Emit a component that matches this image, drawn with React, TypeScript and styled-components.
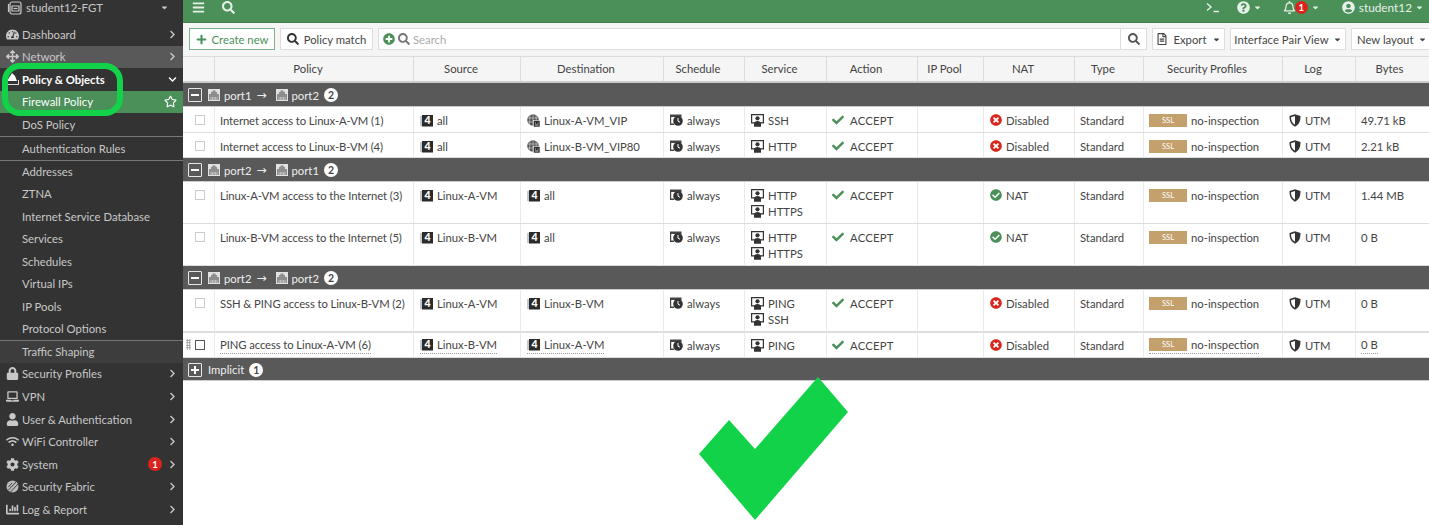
import React from 'react'
import styled, { createGlobalStyle } from 'styled-components'
import {
  FaArrowsAlt,
  FaBars,
  FaCaretDown,
  FaChartBar,
  FaCheck,
  FaCheckCircle,
  FaChevronDown,
  FaChevronRight,
  FaCog,
  FaLaptop,
  FaLock,
  FaPlus,
  FaPlusCircle,
  FaQuestionCircle,
  FaRegBell,
  FaRegFileAlt,
  FaRegStar,
  FaSearch,
  FaTachometerAlt,
  FaTimesCircle,
  FaUser,
  FaUserCircle,
  FaWifi,
} from 'react-icons/fa'

const GlobalStyle = createGlobalStyle`
  html, body {
    margin: 0;
    padding: 0;
    background: #fff;
  }
  * {
    box-sizing: border-box;
  }
`

const Page = styled.div`
  position: relative;
  width: 1429px;
  height: 525px;
  display: flex;
  overflow: hidden;
  font-family: Lato, 'Open Sans', sans-serif;
  font-size: 11.3px;
  color: #444;
`

/* ---- sidebar ---- */

const Sidebar = styled.nav`
  width: 183px;
  flex-shrink: 0;
  height: 525px;
  background: #333;
  color: #ccc;
  display: flex;
  flex-direction: column;
  overflow: hidden;
`

const DeviceRow = styled.div`
  height: 23px;
  flex-shrink: 0;
  padding: 0 14px 8px 7px;
  display: flex;
  align-items: center;
  gap: 3px;
  font-size: 11.4px;
  color: #c8c8c8;
`

const NavItem = styled.div<{ $hover?: boolean; $active?: boolean; $open?: boolean; $sub?: boolean; $tall?: boolean; $shade?: boolean; $rule?: boolean }>`
  height: ${({ $tall }) => ($tall ? '24px' : '22.55px')};
  flex-shrink: 0;
  display: flex;
  align-items: center;
  padding: 0 6px 0 ${({ $sub }) => ($sub ? '22px' : '4px')};
  color: ${({ $active, $open }) => ($active || $open ? '#fff' : '#c8c8c8')};
  font-weight: ${({ $open }) => ($open ? 700 : 400)};
  background: ${({ $hover, $active, $shade }) =>
    $active ? '#4a9058' : $hover ? '#595959' : $shade ? '#3d3d3d' : '#333'};
  border-top: ${({ $rule }) => ($rule ? '1px solid #777' : '0')};
`

const NavIcon = styled.span`
  width: 17px;
  margin-right: 1px;
  display: flex;
  justify-content: center;
  font-size: 13px;
`

const NavLabel = styled.span`
  flex: 1;
  white-space: nowrap;
`

const NavChevron = styled.span`
  display: flex;
  font-size: 9px;
  margin-left: 6px;
`

const AlertBadge = styled.span`
  width: 14px;
  height: 14px;
  border-radius: 50%;
  background: #d9251d;
  color: #fff;
  font-size: 9.5px;
  font-weight: 700;
  display: flex;
  align-items: center;
  justify-content: center;
`

/* ---- main column ---- */

const Main = styled.main`
  flex: 1;
  min-width: 0;
  display: flex;
  flex-direction: column;
`

const TopBar = styled.header`
  height: 23px;
  flex-shrink: 0;
  background: #4a9058;
  border-bottom: 1px solid #3f8050;
  color: #e6f0e8;
  display: flex;
  align-items: center;
  padding: 0 5px 7px 9px;
  font-size: 11.8px;
`

const TopIcon = styled.span<{ $gap?: number }>`
  display: flex;
  align-items: center;
  font-size: 13px;
  margin-right: ${({ $gap }) => $gap ?? 0}px;
`

const TopName = styled.span`
  margin-left: 4px;
  line-height: 16px;
`

const Spacer = styled.div`
  flex: 1;
`

const TopCaret = styled.span`
  display: flex;
  font-size: 9px;
  margin-left: 3px;
`

const BellBadge = styled(AlertBadge)`
  width: 13px;
  height: 13px;
  margin-left: -1px;
`

const Toolbar = styled.div`
  height: 33px;
  flex-shrink: 0;
  background: #f5f5f5;
  padding: 5px 0 6px 6px;
  display: flex;
  align-items: stretch;
  gap: 5px;
`

const ToolButton = styled.div<{ $primary?: boolean; $width: number }>`
  width: ${({ $width }) => $width}px;
  flex-shrink: 0;
  display: flex;
  align-items: center;
  justify-content: center;
  gap: 5px;
  background: #fff;
  border: 1px solid ${({ $primary }) => ($primary ? '#7eb28a' : '#ddd')};
  color: ${({ $primary }) => ($primary ? '#4a9058' : '#444')};
  white-space: nowrap;

  svg {
    flex-shrink: 0;
  }
`

const PairButton = styled(ToolButton)`
  gap: 4px;
  letter-spacing: 0.05px;
`

const LayoutButton = styled(ToolButton)`
  justify-content: flex-start;
  padding-left: 5px;
  border-right: 0;
`

const SearchBox = styled.div`
  flex: 1;
  min-width: 0;
  display: flex;
  align-items: center;
  background: #fff;
  border: 1px solid #ddd;
  padding-left: 4px;
  color: #aaa;
  gap: 3px;
`

const SearchText = styled.span`
  flex: 1;
`

const SearchButton = styled.span`
  width: 26px;
  height: 100%;
  border-left: 1px solid #ddd;
  color: #555;
  display: flex;
  align-items: center;
  justify-content: center;
`

const GRID = '32px 199px 107px 143px 81px 82px 91px 66px 91px 69px 139px 73px 73px'

const HeaderRow = styled.div`
  height: 27px;
  flex-shrink: 0;
  display: grid;
  grid-template-columns: ${GRID};
  background: #f5f5f5;
  border-top: 1px solid #ddd;
  border-bottom: 2px solid #ccc;
`

const HeaderCell = styled.div`
  display: flex;
  align-items: center;
  justify-content: center;
  padding: 0 12px 1px 0;
  border-right: 1px solid #ddd;
  color: #444;

  &:last-child {
    border-right: 0;
    padding-right: 6px;
  }
`

const SectionRow = styled.div<{ $height?: number }>`
  height: ${({ $height }) => $height ?? 24}px;
  flex-shrink: 0;
  background: #595959;
  border-bottom: 1px solid #ccc;
  color: #eee;
  display: flex;
  align-items: center;
  padding: 1px 0 0 5px;
  gap: 4px;
`

const Toggle = styled.span`
  width: 14px;
  height: 14px;
  border: 1px solid #e6e6e6;
  border-radius: 1px;
  background: #595959;
  position: relative;
  margin-right: 2px;

  &:before {
    content: '';
    position: absolute;
    left: 2px;
    right: 2px;
    top: 5px;
    height: 2px;
    background: #fff;
  }
`

const ToggleOpen = styled(Toggle)`
  &:after {
    content: '';
    position: absolute;
    top: 2px;
    bottom: 2px;
    left: 5px;
    width: 2px;
    background: #fff;
  }
`

const Arrow = styled.span`
  margin: 0 5px 0 1px;
  font-size: 12px;
  font-family: 'DejaVu Sans', sans-serif;
  line-height: 1;
`

const CountBadge = styled.span`
  width: 14px;
  height: 14px;
  border-radius: 50%;
  background: #fff;
  color: #444;
  font-size: 10.5px;
  font-weight: 700;
  display: flex;
  align-items: center;
  justify-content: center;
  margin-left: 1px;
`

const DataRow = styled.div<{ $height: number; $hover?: boolean }>`
  position: relative;
  height: ${({ $height }) => $height}px;
  flex-shrink: 0;
  display: grid;
  grid-template-columns: ${GRID};
  border-bottom: 1px solid #ddd;
  box-shadow: ${({ $hover }) => ($hover ? 'inset 0 1px 0 #ddd' : 'none')};
  background: #fff;
`

const Cell = styled.div`
  padding: 5px 5px 0;
  border-right: 1px solid #eaeaea;
  display: flex;
  flex-direction: column;
  align-items: flex-start;
  gap: 0;
  white-space: nowrap;

  &:last-child {
    border-right: 0;
  }
`

const IconCell = styled(Cell)`
  padding-left: 6px;
`

const CheckCell = styled(Cell)`
  padding: 8px 0 0 12px;
`

const CheckBox = styled.span<{ $dark?: boolean }>`
  width: 10px;
  height: 10px;
  border: 1px solid ${({ $dark }) => ($dark ? '#555' : '#ccc')};
  background: #fff;
  display: block;
`

const DragDots = styled.span`
  position: absolute;
  left: 3px;
  top: 7px;
  width: 5px;
  height: 11px;
  background-image: radial-gradient(#777 0.8px, transparent 0.9px);
  background-size: 2.5px 2.5px;
`

const CellLine = styled.span<{ $hover?: boolean }>`
  height: 16.5px;
  display: inline-flex;
  align-items: center;
  gap: 4px;
  color: #444;
  border-bottom: ${({ $hover }) => ($hover ? '1px dotted #999' : '0')};
`

const PolicyName = styled(CellLine)`
  letter-spacing: -0.1px;
`

const AcceptLine = styled(CellLine)`
  gap: 6px;
  letter-spacing: 0.2px;
`

const SslTag = styled.span`
  width: 38px;
  height: 13px;
  background: #c4a06c;
  color: #fff;
  font-size: 7.5px;
  display: inline-flex;
  align-items: center;
  justify-content: center;
`

const Blank = styled.div`
  flex: 1;
  background: #fff;
`

/* annotations sitting on top of the screenshot */

const Ring = styled.div`
  position: absolute;
  left: 2px;
  top: 63px;
  width: 121px;
  height: 53px;
  border: 6px solid #12d24a;
  border-radius: 18px;
  pointer-events: none;
`

const BigCheck = styled.svg`
  position: absolute;
  left: 690px;
  top: 370px;
  pointer-events: none;
`

/* ---- drawn icons ---- */

const DeviceIcon = () => (
  <svg width="16" height="16" viewBox="0 0 16 16" fill="none" stroke="#c8c8c8" strokeWidth="1.2">
    <rect x="3" y="2" width="11" height="12" rx="2" />
    <path d="M1.500 4v8M5 6h7v5H5z" />
    <path d="M6.500 8.500h4" />
  </svg>
)

const PolicyIcon = () => (
  <svg width="15" height="14" viewBox="0 0 15 14">
    <path d="M2 9 L7 1 L10 4 L12 9z" fill="#fff" />
    <path d="M1 8v5h13V8h-1v4H2V8z" fill="#ddd" />
  </svg>
)

const FabricIcon = () => (
  <svg width="13" height="13" viewBox="0 0 13 13">
    <circle cx="6.500" cy="6.500" r="6" fill="#bbb" />
    <path d="M2 10.500 10 2M4.500 12 12 4M6 3 2.500 7" stroke="#333" strokeWidth="0.9" />
  </svg>
)

const TerminalIcon = () => (
  <svg width="14" height="11" viewBox="0 0 14 11" fill="none" stroke="#e6f0e8" strokeWidth="1.4">
    <path d="M1 1.500 5 5 1 8.500M7.500 9.500H13" />
  </svg>
)

const PortIcon = () => (
  <svg width="12" height="12" viewBox="0 0 12 12">
    <rect width="12" height="12" fill="#e2e2e2" />
    <path d="M1 11V5h2V3h1.500V1.500h3V3H9v2h2v6z" fill="#8e8e8e" />
    <path d="M3 8v3M4.500 8v3M6 8v3M7.500 8v3M9 8v3" stroke="#e2e2e2" strokeWidth="0.6" />
  </svg>
)

const AddressIcon = () => (
  <svg width="13" height="13" viewBox="0 0 13 13">
    <rect x="2" y="1" width="11" height="11.500" fill="#2b2b2b" />
    <path d="M0 3h2M0 5h2M0 7h2M0 9h2M0 11h2" stroke="#777" strokeWidth="0.8" />
    <text x="7.500" y="10.400" fontFamily="Lato, sans-serif" fontWeight="900" fontSize="10.500" fill="#fff" textAnchor="middle">
      4
    </text>
  </svg>
)

const VipIcon = () => (
  <svg width="13" height="13" viewBox="0 0 13 13">
    <circle cx="6" cy="6" r="5.800" fill="#555" />
    <path d="M0.500 4h11M0.500 8h11M6 0v12M3 1 2.500 11M9 1l.5 10" stroke="#ddd" strokeWidth="0.6" />
    <rect x="6.500" y="6.500" width="6.500" height="6.500" fill="#2b2b2b" stroke="#fff" strokeWidth="0.6" />
    <path d="M8 9h1M10.500 9h1M8 11h3.500" stroke="#ddd" strokeWidth="0.9" />
  </svg>
)

const ScheduleIcon = () => (
  <svg width="13" height="12" viewBox="0 0 13 12">
    <path d="M0 0.500h11.500V3H1.200v6.500H4V11H0z" fill="#444" />
    <circle cx="8" cy="7" r="4.800" fill="#333" />
    <path d="M8 4v3.200l2 1" stroke="#fff" strokeWidth="1" fill="none" />
  </svg>
)

const ServiceIcon = () => (
  <svg width="13" height="13" viewBox="0 0 13 13">
    <path d="M0 0h13v9.500H9V8.300h2.800V1.200H1.200v7.100H4v1.200H0z" fill="#333" />
    <circle cx="6.500" cy="4.300" r="2.100" fill="#333" />
    <path d="M3 12.800V9.500c0-1.500 1.600-2.600 3.500-2.600S10 8 10 9.500v3.300z" fill="#333" />
  </svg>
)

const ShieldIcon = () => (
  <svg width="12" height="13" viewBox="0 0 12 13">
    <path d="M6 0.300 11.500 2c0 5-1.300 8.500-5.500 10.700C1.800 10.500.5 7 .5 2z" fill="#333" />
    <path d="M6 2 2 3.200c0 3.300.9 5.800 4 7.500z" fill="#fff" />
  </svg>
)

/* ---- data ---- */

type NavEntry = {
  label: string
  icon?: React.ReactNode
  hover?: boolean
  open?: boolean
  active?: boolean
  sub?: boolean
  tall?: boolean
  shade?: boolean
  rule?: boolean
  arrow?: boolean
  alert?: boolean
  star?: boolean
}

const navItems: NavEntry[] = [
  { label: 'Dashboard', icon: <FaTachometerAlt />, arrow: true },
  { label: 'Network', icon: <FaArrowsAlt />, hover: true, arrow: true },
  { label: 'Policy & Objects', icon: <PolicyIcon />, open: true },
  { label: 'Firewall Policy', sub: true, active: true, star: true },
  { label: 'DoS Policy', sub: true },
  { label: 'Authentication Rules', sub: true, tall: true, rule: true },
  { label: 'Addresses', sub: true, rule: true },
  { label: 'ZTNA', sub: true },
  { label: 'Internet Service Database', sub: true },
  { label: 'Services', sub: true },
  { label: 'Schedules', sub: true },
  { label: 'Virtual IPs', sub: true },
  { label: 'IP Pools', sub: true },
  { label: 'Protocol Options', sub: true },
  { label: 'Traffic Shaping', sub: true, shade: true, rule: true },
  { label: 'Security Profiles', icon: <FaLock />, arrow: true },
  { label: 'VPN', icon: <FaLaptop />, arrow: true },
  { label: 'User & Authentication', icon: <FaUser />, arrow: true },
  { label: 'WiFi Controller', icon: <FaWifi />, arrow: true },
  { label: 'System', icon: <FaCog />, arrow: true, alert: true },
  { label: 'Security Fabric', icon: <FabricIcon />, arrow: true },
  { label: 'Log & Report', icon: <FaChartBar />, arrow: true },
]

const columns = [
  '',
  'Policy',
  'Source',
  'Destination',
  'Schedule',
  'Service',
  'Action',
  'IP Pool',
  'NAT',
  'Type',
  'Security Profiles',
  'Log',
  'Bytes',
]

type Policy = {
  name: string
  source: string
  dest: string
  vip?: boolean
  services: string[]
  nat: boolean
  bytes: string
  height: number
  hover?: boolean
}

type Section = { from: string; to: string; count: number; rows: Policy[] }

const sections: Section[] = [
  {
    from: 'port1',
    to: 'port2',
    count: 2,
    rows: [
      { name: 'Internet access to Linux-A-VM (1)', source: 'all', dest: 'Linux-A-VM_VIP', vip: true, services: ['SSH'], nat: false, bytes: '49.71 kB', height: 26 },
      { name: 'Internet access to Linux-B-VM (4)', source: 'all', dest: 'Linux-B-VM_VIP80', vip: true, services: ['HTTP'], nat: false, bytes: '2.21 kB', height: 25 },
    ],
  },
  {
    from: 'port2',
    to: 'port1',
    count: 2,
    rows: [
      { name: 'Linux-A-VM access to the Internet (3)', source: 'Linux-A-VM', dest: 'all', services: ['HTTP', 'HTTPS'], nat: true, bytes: '1.44 MB', height: 42 },
      { name: 'Linux-B-VM access to the Internet (5)', source: 'Linux-B-VM', dest: 'all', services: ['HTTP', 'HTTPS'], nat: true, bytes: '0 B', height: 42 },
    ],
  },
  {
    from: 'port2',
    to: 'port2',
    count: 2,
    rows: [
      { name: 'SSH & PING access to Linux-B-VM (2)', source: 'Linux-A-VM', dest: 'Linux-B-VM', services: ['PING', 'SSH'], nat: false, bytes: '0 B', height: 42 },
      { name: 'PING access to Linux-A-VM (6)', source: 'Linux-B-VM', dest: 'Linux-A-VM', services: ['PING'], nat: false, bytes: '0 B', height: 26, hover: true },
    ],
  },
]

const PolicyRow = ({ row }: { row: Policy }) => (
  <DataRow $height={row.height} $hover={row.hover}>
    {row.hover && <DragDots />}
    <CheckCell>
      <CheckBox $dark={row.hover} />
    </CheckCell>
    <Cell>
      <PolicyName $hover={row.hover}>{row.name}</PolicyName>
    </Cell>
    <IconCell>
      <CellLine $hover={row.hover}>
        <AddressIcon />
        {row.source}
      </CellLine>
    </IconCell>
    <IconCell>
      <CellLine $hover={row.hover}>
        {row.vip ? <VipIcon /> : <AddressIcon />}
        {row.dest}
      </CellLine>
    </IconCell>
    <IconCell>
      <CellLine>
        <ScheduleIcon />
        always
      </CellLine>
    </IconCell>
    <IconCell>
      {row.services.map((service) => (
        <CellLine key={service}>
          <ServiceIcon />
          {service}
        </CellLine>
      ))}
    </IconCell>
    <Cell>
      <AcceptLine>
        <FaCheck size={12} color="#4a9058" />
        ACCEPT
      </AcceptLine>
    </Cell>
    <Cell />
    <IconCell>
      <CellLine>
        {row.nat ? <FaCheckCircle size={12} color="#4a9058" /> : <FaTimesCircle size={12} color="#d9251d" />}
        {row.nat ? 'NAT' : 'Disabled'}
      </CellLine>
    </IconCell>
    <Cell>
      <CellLine>Standard</CellLine>
    </Cell>
    <Cell>
      <CellLine $hover={row.hover}>
        <SslTag>SSL</SslTag>
        no-inspection
      </CellLine>
    </Cell>
    <IconCell>
      <CellLine>
        <ShieldIcon />
        UTM
      </CellLine>
    </IconCell>
    <Cell>
      <CellLine $hover={row.hover}>{row.bytes}</CellLine>
    </Cell>
  </DataRow>
)

export default function App() {
  return (
    <Page>
      <GlobalStyle />
      <Sidebar>
        <DeviceRow>
          <DeviceIcon />
          <NavLabel>student12-FGT</NavLabel>
          <FaCaretDown size={9} />
        </DeviceRow>
        {navItems.map((item) => (
          <NavItem
            key={item.label}
            $hover={item.hover}
            $active={item.active}
            $open={item.open}
            $sub={item.sub}
            $tall={item.tall}
            $shade={item.shade}
            $rule={item.rule}
          >
            {item.icon && <NavIcon>{item.icon}</NavIcon>}
            <NavLabel>{item.label}</NavLabel>
            {item.alert && <AlertBadge>1</AlertBadge>}
            {item.arrow && (
              <NavChevron>
                <FaChevronRight />
              </NavChevron>
            )}
            {item.open && (
              <NavChevron>
                <FaChevronDown />
              </NavChevron>
            )}
            {item.star && <FaRegStar size={13} />}
          </NavItem>
        ))}
      </Sidebar>
      <Main>
        <TopBar>
          <TopIcon $gap={17}>
            <FaBars />
          </TopIcon>
          <TopIcon>
            <FaSearch />
          </TopIcon>
          <Spacer />
          <TopIcon $gap={17}>
            <TerminalIcon />
          </TopIcon>
          <TopIcon $gap={21}>
            <FaQuestionCircle />
            <TopCaret>
              <FaCaretDown />
            </TopCaret>
          </TopIcon>
          <TopIcon $gap={22}>
            <FaRegBell />
            <BellBadge>1</BellBadge>
            <TopCaret>
              <FaCaretDown />
            </TopCaret>
          </TopIcon>
          <TopIcon>
            <FaUserCircle />
          </TopIcon>
          <TopName>student12</TopName>
          <TopCaret>
            <FaCaretDown />
          </TopCaret>
        </TopBar>
        <Toolbar>
          <ToolButton $primary $width={86}>
            <FaPlus size={11} />
            Create new
          </ToolButton>
          <ToolButton $width={93}>
            <FaSearch size={12} color="#333" />
            Policy match
          </ToolButton>
          <SearchBox>
            <FaPlusCircle size={12} color="#4a9058" />
            <FaSearch size={12} color="#777" />
            <SearchText>Search</SearchText>
            <SearchButton>
              <FaSearch size={12} />
            </SearchButton>
          </SearchBox>
          <ToolButton $width={73}>
            <FaRegFileAlt size={12} />
            Export
            <FaCaretDown size={9} />
          </ToolButton>
          <PairButton $width={116}>
            Interface Pair View
            <FaCaretDown size={9} />
          </PairButton>
          <LayoutButton $width={78}>
            New layout
            <FaCaretDown size={9} />
          </LayoutButton>
        </Toolbar>
        <HeaderRow>
          {columns.map((column) => (
            <HeaderCell key={column || 'select'}>{column}</HeaderCell>
          ))}
        </HeaderRow>
        {sections.map((section) => (
          <React.Fragment key={section.from + section.to}>
            <SectionRow>
              <Toggle />
              <PortIcon />
              {section.from}
              <Arrow>→</Arrow>
              <PortIcon />
              {section.to}
              <CountBadge>{section.count}</CountBadge>
            </SectionRow>
            {section.rows.map((row) => (
              <PolicyRow key={row.name} row={row} />
            ))}
          </React.Fragment>
        ))}
        <SectionRow $height={23}>
          <ToggleOpen />
          Implicit
          <CountBadge>1</CountBadge>
        </SectionRow>
        <Blank />
      </Main>
      <Ring />
      <BigCheck width="170" height="155" viewBox="690 370 170 155">
        <polygon points="699,454 729,420 755,449 818,377 848,412 755,520" fill="#12d24a" />
      </BigCheck>
    </Page>
  )
}
